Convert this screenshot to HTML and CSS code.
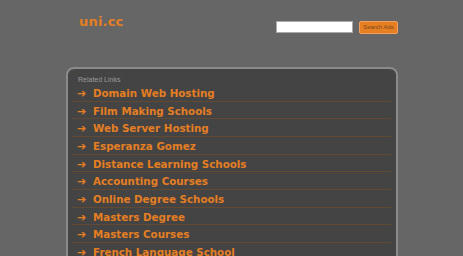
FILE: index.html
```html
<!DOCTYPE html>
<html>
<head>
<meta charset="utf-8">
<link rel="stylesheet" href="styles.css">
</head>
<body>
<div class="wrap">
  <header class="top">
    <div class="logo">uni.cc</div>
    <form class="search">
      <input class="search-box" type="text">
      <button class="search-btn" type="button">Search Ads</button>
    </form>
  </header>
  <section class="panel">
    <div class="panel-title">Related Links</div>
    <ul class="links">
      <li><span class="arrow">➔</span><a href="#">Domain Web Hosting</a></li>
      <li><span class="arrow">➔</span><a href="#">Film Making Schools</a></li>
      <li><span class="arrow">➔</span><a href="#">Web Server Hosting</a></li>
      <li><span class="arrow">➔</span><a href="#">Esperanza Gomez</a></li>
      <li><span class="arrow">➔</span><a href="#">Distance Learning Schools</a></li>
      <li><span class="arrow">➔</span><a href="#">Accounting Courses</a></li>
      <li><span class="arrow">➔</span><a href="#">Online Degree Schools</a></li>
      <li><span class="arrow">➔</span><a href="#">Masters Degree</a></li>
      <li><span class="arrow">➔</span><a href="#">Masters Courses</a></li>
      <li><span class="arrow">➔</span><a href="#">French Language School</a></li>
    </ul>
  </section>
</div>
</body>
</html>
```
FILE: styles.css
```css
html, body {
  margin: 0;
  padding: 0;
  background: #666666;
  overflow: hidden;
}
body {
  font-family: "DejaVu Sans", Verdana, sans-serif;
}
.wrap {
  width: 332px;
  margin: 0 auto;
  padding-left: 1px;
}
.top {
  height: 67px;
  display: flex;
  justify-content: space-between;
  align-items: flex-start;
}
.logo {
  margin: 14px 0 0 13px;
  font-size: 13px;
  font-weight: bold;
  color: #e67e22;
  letter-spacing: 0.2px;
}
.search {
  margin: 21px 0 0 0;
  display: flex;
  gap: 6px;
}
.search-box {
  width: 77px;
  height: 12px;
  box-sizing: border-box;
  border: 1px solid #aaa;
  background: #fff;
  padding: 0;
  margin: 0;
}
.search-btn {
  width: 39px;
  height: 13px;
  box-sizing: border-box;
  border: 1px solid #f0a060;
  border-radius: 2px;
  background: #e67e22;
  color: #7a4a20;
  font-family: "Liberation Sans", Arial, sans-serif;
  font-size: 6px;
  padding: 0;
  margin: -0.5px 0 0 0;
}
.panel {
  background: #444444;
  border: 2px solid #8a8a8a;
  border-bottom: none;
  border-radius: 8px 8px 0 0;
  padding: 6px 4px 0 4px;
  height: 200px;
}
.panel-title {
  font-family: "Liberation Sans", Arial, sans-serif;
  font-size: 7px;
  color: #9a9a9a;
  margin-left: 6px;
  height: 9px;
  line-height: 9px;
}
.links {
  list-style: none;
  margin: 0;
  padding: 0;
}
.links li {
  height: 16.66px;
  line-height: 16.66px;
  border-bottom: 1px solid #624934;
  padding-left: 5px;
  margin-right: 1px;
  white-space: nowrap;
}
.arrow {
  display: inline-block;
  width: 16px;
  color: #e67e22;
  font-size: 11px;
  font-weight: bold;
}
.links a {
  color: #e67e22;
  text-decoration: none;
  font-weight: bold;
  font-size: 10.3px;
}
```
